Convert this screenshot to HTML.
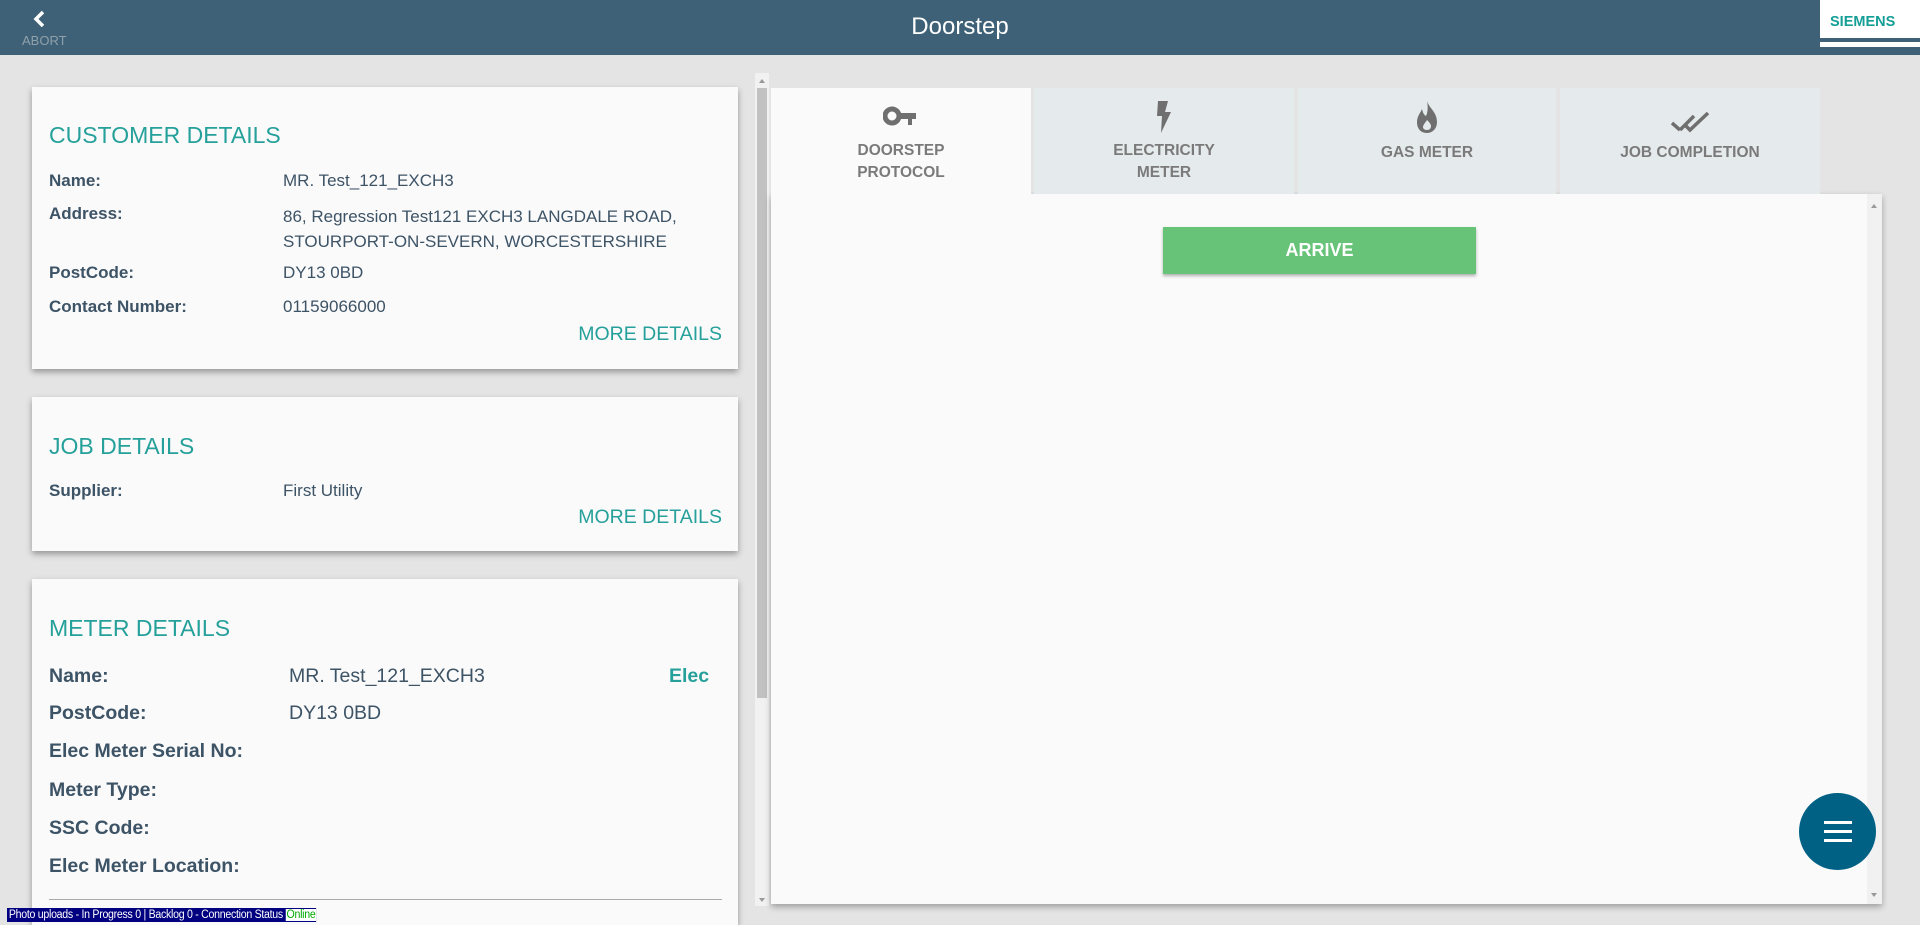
<!DOCTYPE html>
<html style="overflow:hidden;width:1920px;height:925px"><head><meta charset="utf-8"><style>
*{box-sizing:border-box;margin:0;padding:0}
body{width:1920px;height:925px;overflow:hidden;background:#e4e4e4;font-family:"Liberation Sans",Arial,sans-serif;position:relative}
.hdr{position:absolute;left:0;top:0;width:1920px;height:55px;background:#3e6177}
.title{position:absolute;left:0;width:1920px;top:13px;text-align:center;color:#fff;font-size:24px}
.abort{position:absolute;left:22px;top:33px;color:#8fa0aa;font-size:13px}
.logo{position:absolute;left:1820px;top:0;width:100px;height:55px}
.card{position:absolute;left:32px;width:706px;background:#fafafa;box-shadow:0 3px 6px rgba(0,0,0,.35)}
.h{position:absolute;left:17px;color:#26a09a;font-size:23px}
.l{position:absolute;left:17px;color:#3d5366;font-weight:bold;font-size:17px}
.v{position:absolute;left:251px;color:#3d5366;font-size:17px}
.more{position:absolute;right:16px;color:#26a09a;font-size:19.5px}
.m .l,.m .v{font-size:19.5px}
.m .v{left:257px}
.tab{position:absolute;top:88px;height:106px;background:#e5eaec;text-align:center;color:#7a7a7a;font-weight:bold;font-size:15.5px;line-height:22px}
.tab svg{position:absolute;left:50%;top:16px;transform:translateX(-50%)}
.tab .t{position:absolute;left:0;right:0;top:52px}
</style></head><body>
<div class="hdr">
<svg style="position:absolute;left:32px;top:10px" width="16" height="18" viewBox="0 0 16 18"><path d="M11 2 L4 9 L11 16" stroke="#fff" stroke-width="3.5" fill="none"/></svg>
<div class="abort">ABORT</div>
<div class="title">Doorstep</div>
<svg class="logo" viewBox="0 0 100 55"><rect x="0" y="0" width="100" height="38" fill="#fff"/><rect x="0" y="42" width="100" height="5" fill="#fff"/><text x="10" y="26" fill="#159e96" font-family="Liberation Sans" font-weight="bold" font-size="14.5">SIEMENS</text></svg>
</div>

<div class="card" style="top:87px;height:282px">
<div class="h" style="top:35px">CUSTOMER DETAILS</div>
<div class="l" style="top:84px">Name:</div><div class="v" style="top:84px">MR. Test_121_EXCH3</div>
<div class="l" style="top:117px">Address:</div><div class="v" style="top:117px;line-height:25px">86, Regression Test121 EXCH3 LANGDALE ROAD,<br>STOURPORT-ON-SEVERN, WORCESTERSHIRE</div>
<div class="l" style="top:176px">PostCode:</div><div class="v" style="top:176px">DY13 0BD</div>
<div class="l" style="top:210px">Contact Number:</div><div class="v" style="top:210px">01159066000</div>
<div class="more" style="top:236px">MORE DETAILS</div>
</div>

<div class="card" style="top:397px;height:154px">
<div class="h" style="top:36px">JOB DETAILS</div>
<div class="l" style="top:84px">Supplier:</div><div class="v" style="top:84px">First Utility</div>
<div class="more" style="top:109px">MORE DETAILS</div>
</div>

<div class="card m" style="top:579px;height:346px">
<div class="h" style="top:36px">METER DETAILS</div>
<div class="l" style="top:86px">Name:</div><div class="v" style="top:86px">MR. Test_121_EXCH3</div>
<div style="position:absolute;left:637px;top:86px;color:#26a09a;font-weight:bold;font-size:19.5px">Elec</div>
<div class="l" style="top:123px">PostCode:</div><div class="v" style="top:123px">DY13 0BD</div>
<div class="l" style="top:161px">Elec Meter Serial No:</div>
<div class="l" style="top:200px">Meter Type:</div>
<div class="l" style="top:238px">SSC Code:</div>
<div class="l" style="top:276px">Elec Meter Location:</div>
<div style="position:absolute;left:17px;top:320px;width:673px;height:1px;background:#aaa"></div>
</div>

<div style="position:absolute;left:755px;top:73px;width:14px;height:833px;background:#f1f1f1"></div>
<div style="position:absolute;left:757px;top:88px;width:10px;height:610px;background:#c1c1c1"></div>
<div style="position:absolute;left:759px;top:76px;border:3px solid transparent;border-bottom:4px solid #999;width:0;height:0"></div>
<div style="position:absolute;left:759px;top:898px;border:3px solid transparent;border-top:4px solid #999;width:0;height:0"></div>

<div style="position:absolute;left:771px;top:194px;width:1111px;height:710px;background:#fafafa;box-shadow:0 3px 6px rgba(0,0,0,.3)"></div>
<div style="position:absolute;left:1867px;top:194px;width:15px;height:710px;background:#f1f1f1"></div>
<div style="position:absolute;left:1871px;top:201px;border:3.5px solid transparent;border-bottom:4px solid #999;width:0;height:0"></div>
<div style="position:absolute;left:1871px;top:893px;border:3.5px solid transparent;border-top:4px solid #999;width:0;height:0"></div>

<div class="tab" style="left:771px;width:260px;background:#fafafa">
<svg width="36" height="24" viewBox="0 0 36 24"><circle cx="9" cy="12" r="7" fill="none" stroke="#6f6f6f" stroke-width="5"/><path d="M15 9 H33 V15 H29 V21 H25 V15 H15 Z" fill="#6f6f6f"/></svg>
<div class="t">DOORSTEP<br>PROTOCOL</div></div>
<div class="tab" style="left:1034px;width:260px">
<svg width="20" height="34" viewBox="0 0 20 34" style="top:12px"><path d="M4 1 H14 L11 12 H17 L7 33 L8 16 H3 Z" fill="#6f6f6f"/></svg>
<div class="t">ELECTRICITY<br>METER</div></div>
<div class="tab" style="left:1298px;width:258px">
<svg width="24" height="34" viewBox="0 0 24 34" style="top:12px"><path d="M12 1 C14 8 22 12 22 22 C22 29 17 33 12 33 C6 33 2 29 2 22 C2 16 6 12 7 9 C8 13 9 15 11 16 C13 12 13 6 12 1 Z M12 20 C10 23 8 25 8 27 C8 29 10 30 12 30 C15 30 16 28 16 26 C16 24 14 22 12 20Z" fill="#6f6f6f" fill-rule="evenodd"/></svg>
<div class="t" style="top:54px">GAS METER</div></div>
<div class="tab" style="left:1560px;width:260px">
<svg width="40" height="26" viewBox="0 0 40 26" style="top:22px"><path d="M2 13 L10 20 M10 20 L24 6 M14 14 L20 20 L38 3" stroke="#6f6f6f" stroke-width="3.5" fill="none"/></svg>
<div class="t" style="top:54px">JOB COMPLETION</div></div>

<div style="position:absolute;left:1163px;top:227px;width:313px;height:47px;background:#66c377;box-shadow:0 2px 3px rgba(0,0,0,.3);color:#fff;font-weight:bold;font-size:18px;text-align:center;line-height:47px">ARRIVE</div>

<div style="position:absolute;left:1799px;top:793px;width:77px;height:77px;border-radius:50%;background:#006185">
<div style="position:absolute;left:25px;top:28px;width:28px;height:3px;background:#fff"></div>
<div style="position:absolute;left:25px;top:37px;width:28px;height:3px;background:#fff"></div>
<div style="position:absolute;left:25px;top:46px;width:28px;height:3px;background:#fff"></div>
</div>

<div style="position:absolute;left:7px;top:908px;height:14px;background:#000080;color:#fff;font-size:11.5px;line-height:14px;padding:0 0 0 2px;white-space:nowrap;letter-spacing:-0.3px;transform:scaleX(0.92);transform-origin:0 0">Photo uploads - In Progress 0 | Backlog 0 - Connection Status <span style="background:#fff;color:#0a0;padding:0 1px">Online</span></div>
</body></html>
